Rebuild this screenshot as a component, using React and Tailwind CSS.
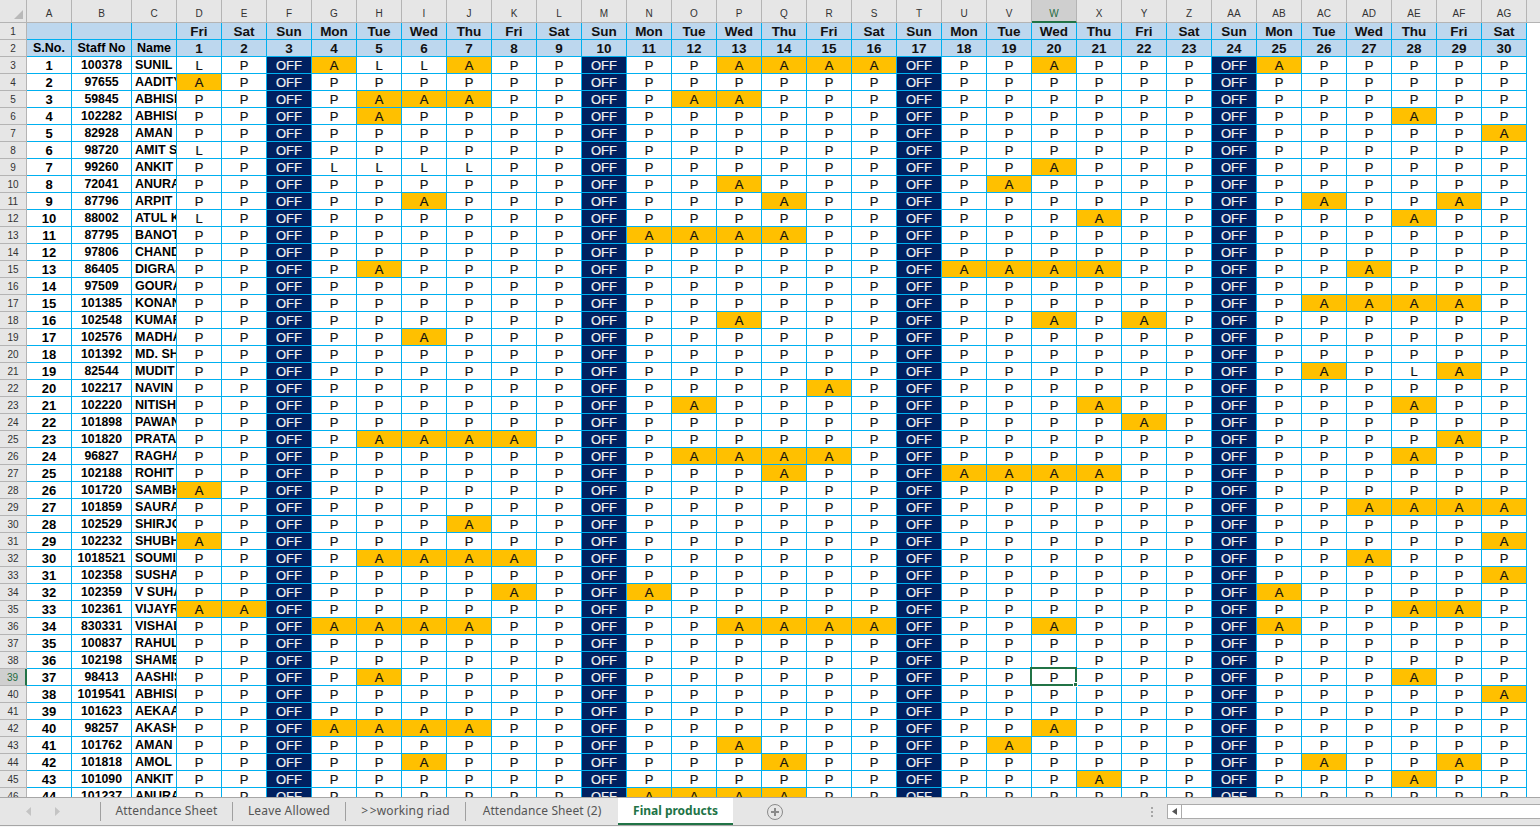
const days = ['Fri', 'Sat', 'Sun', 'Mon', 'Tue', 'Wed', 'Thu'];
const letters = ['A','B','C','D','E','F','G','H','I','J','K','L','M','N','O','P','Q','R','S','T','U','V','W','X','Y','Z','AA','AB','AC','AD','AE','AF','AG'];

const staff = [
  ['100378', 'SUNIL', { a: [4, 7, 13, 14, 15, 16, 20, 25], l: [1, 5, 6] }],
  ['97655', 'AADITYA', { a: [1] }],
  ['59845', 'ABHISHEK', { a: [5, 6, 7, 12, 13] }],
  ['102282', 'ABHISHEK', { a: [5, 28] }],
  ['82928', 'AMAN', { a: [30] }],
  ['98720', 'AMIT S', { l: [1] }],
  ['99260', 'ANKIT', { a: [20], l: [4, 5, 6, 7] }],
  ['72041', 'ANURAG', { a: [13, 19] }],
  ['87796', 'ARPIT', { a: [6, 14, 26, 29] }],
  ['88002', 'ATUL K', { a: [21, 28], l: [1] }],
  ['87795', 'BANOTH', { a: [11, 12, 13, 14] }],
  ['97806', 'CHAND', {}],
  ['86405', 'DIGRAJ', { a: [5, 18, 19, 20, 21, 27] }],
  ['97509', 'GOURAV', {}],
  ['101385', 'KONAN', { a: [26, 27, 28, 29] }],
  ['102548', 'KUMAR', { a: [13, 20, 22] }],
  ['102576', 'MADHAV', { a: [6] }],
  ['101392', 'MD. SH', {}],
  ['82544', 'MUDIT', { a: [26, 29], l: [28] }],
  ['102217', 'NAVIN', { a: [15] }],
  ['102220', 'NITISH', { a: [12, 21, 28] }],
  ['101898', 'PAWAN', { a: [22] }],
  ['101820', 'PRATAP', { a: [5, 6, 7, 8, 29] }],
  ['96827', 'RAGHAV', { a: [12, 13, 14, 15, 28] }],
  ['102188', 'ROHIT', { a: [14, 18, 19, 20, 21] }],
  ['101720', 'SAMBHU', { a: [1] }],
  ['101859', 'SAURAB', { a: [27, 28, 29, 30] }],
  ['102529', 'SHIRJO', { a: [7] }],
  ['102232', 'SHUBH', { a: [1, 30] }],
  ['1018521', 'SOUMIK', { a: [5, 6, 7, 8, 27] }],
  ['102358', 'SUSHANT', { a: [30] }],
  ['102359', 'V SUHAS', { a: [8, 11, 25] }],
  ['102361', 'VIJAYR', { a: [1, 2, 28, 29] }],
  ['830331', 'VISHAL', { a: [4, 5, 6, 7, 13, 14, 15, 16, 20, 25] }],
  ['100837', 'RAHUL', {}],
  ['102198', 'SHAMEE', {}],
  ['98413', 'AASHISH', { a: [5, 28] }],
  ['1019541', 'ABHISHEK', { a: [30] }],
  ['101623', 'AEKAAN', {}],
  ['98257', 'AKASH', { a: [4, 5, 6, 7, 20] }],
  ['101762', 'AMAN', { a: [13, 19] }],
  ['101818', 'AMOL', { a: [6, 14, 26, 29] }],
  ['101090', 'ANKIT', { a: [21, 28] }],
  ['101237', 'ANURAG', { a: [11, 12, 13, 14] }],
];

const dayNums = Array.from({ length: 30 }, (_, i) => i + 1);
const cols = 'grid grid-cols-[27px_45px_60px_45px_repeat(30,45px)_13px]';
const cell = 'h-[17px] pt-[1px] flex items-center justify-center overflow-hidden whitespace-nowrap border-r border-b border-[#00b0f0] leading-none';

function RowHead({ n, active }) {
  return (
    <div className={`h-[17px] pt-[1px] flex items-center justify-center border-r border-b border-[#b4b4b4] text-[10px] leading-none ${active ? 'bg-[#cfcfcf] text-[#1e6b41] border-r-2 border-r-[#217346]' : 'bg-[#e6e6e6] text-[#333]'}`}>
      {n}
    </div>
  );
}

function DayCell({ day, row }) {
  if (day % 7 === 3) {
    return <div className={`${cell} bg-[#002060] text-[#f2f2f2] text-[13px] [-webkit-text-stroke:0.2px]`}>OFF</div>;
  }
  const status = row.a?.includes(day) ? 'A' : row.l?.includes(day) ? 'L' : 'P';
  return (
    <div className={`${cell} text-[13px] text-[#111] [-webkit-text-stroke:0.2px] ${status === 'A' ? 'bg-[#ffc000]' : 'bg-white'}`}>{status}</div>
  );
}

function Tab({ children }) {
  return (
    <div className="h-[19px] pb-[1px] flex items-center justify-center border-r border-[#a0a0a0] text-[12px] text-[#555] tracking-[0.15px]">
      {children}
    </div>
  );
}

export default function App() {
  return (
    <div className="w-[1540px] h-[827px] overflow-hidden bg-white flex flex-col font-['Liberation_Sans',Arial,sans-serif]">
      <div className="h-[797px] overflow-hidden shrink-0">
        {/* column letters */}
        <div className={cols}>
          <div className="relative h-[23px] bg-[#e6e6e6] border-r border-b border-[#b4b4b4]">
            <div className="absolute right-[3px] bottom-[3px] w-0 h-0 border-l-[9px] border-l-transparent border-b-[9px] border-b-[#b9b9b9]" />
          </div>
          {letters.map((l) => (
            <div
              key={l}
              className={`h-[23px] flex items-center justify-center border-r text-[10px] pt-[6px] leading-none ${l === 'W' ? 'bg-[#cfcfcf] text-[#1e6b41] border-b-2 border-b-[#217346] border-r-[#b4b4b4]' : 'bg-[#e6e6e6] text-[#333] border-b border-b-[#b4b4b4] border-r-[#b4b4b4]'}`}
            >
              {l}
            </div>
          ))}
          <div className="h-[23px] bg-[#e6e6e6] border-b border-[#b4b4b4]" />
        </div>

        {/* two header rows */}
        <div className={cols}>
          <RowHead n={1} />
          <div className={`${cell} bg-[#bdd7ee]`} />
          <div className={`${cell} bg-[#bdd7ee]`} />
          <div className={`${cell} bg-[#bdd7ee]`} />
          {dayNums.map((d) => (
            <div key={d} className={`${cell} bg-[#bdd7ee] text-[#111] text-[13.5px] font-bold`}>{days[(d - 1) % 7]}</div>
          ))}
          <div className="h-[17px]" />

          <RowHead n={2} />
          <div className={`${cell} bg-[#bdd7ee] text-[12.5px] font-bold`}>S.No.</div>
          <div className={`${cell} bg-[#bdd7ee] text-[12.5px] font-bold`}>Staff No</div>
          <div className={`${cell} bg-[#bdd7ee] text-[12.5px] font-bold`}>Name</div>
          {dayNums.map((d) => (
            <div key={d} className={`${cell} bg-[#bdd7ee] text-[#111] text-[13.5px] font-bold`}>{d}</div>
          ))}
          <div className="h-[17px]" />
        </div>

        {/* staff rows */}
        <div className={`relative ${cols}`}>
          {staff.map((s, i) => (
            <div key={i} className="contents">
              <RowHead n={i + 3} active={i === 36} />
              <div className={`${cell} text-[13px] font-bold`}>{i + 1}</div>
              <div className={`${cell} text-[12.3px] font-bold`}>{s[0]}</div>
              <div className={`${cell} !justify-start pl-[3px] text-[12.5px] font-bold`}>{s[1]}</div>
              {dayNums.map((d) => (
                <DayCell key={d} day={d} row={s[2]} />
              ))}
              <div className="h-[17px]" />
            </div>
          ))}
          {/* selected cell W39 */}
          <div className="absolute left-[1030px] top-[610px] w-[47px] h-[19px] border-2 border-[#217346]">
            <div className="absolute -right-[3px] -bottom-[3px] w-[5px] h-[5px] bg-[#217346] border border-white" />
          </div>
        </div>
      </div>

      {/* sheet tabs */}
      <div className="h-[29px] shrink-0 bg-[#e6e6e6] border-t border-b border-[#a6a6a6] flex items-center font-['Noto_Sans',sans-serif]">
        <div className="w-[101px] h-[19px] flex items-center gap-[22px] pl-[26px] border-r border-[#a0a0a0] text-[#c4c4c4]">
          <svg width="6" height="9" viewBox="0 0 6 9" fill="currentColor"><path d="M5 0v9L0 4.5z" /></svg>
          <svg width="6" height="9" viewBox="0 0 6 9" fill="currentColor"><path d="M1 0v9l5-4.5z" /></svg>
        </div>
        <div className="w-[132px]"><Tab>Attendance Sheet</Tab></div>
        <div className="w-[113px]"><Tab>Leave Allowed</Tab></div>
        <div className="w-[120px]"><Tab>&gt;&#8202;&gt;working riad</Tab></div>
        <div className="w-[152px]"><div className="h-[19px] pb-[1px] flex items-center justify-center text-[12px] text-[#555] tracking-[0.1px]">Attendance Sheet (2)</div></div>
        <div className="w-[115px] h-[27px] -mt-[1px] pt-[1px] bg-white border-b-2 border-[#217346] flex items-center justify-center text-[12px] font-bold text-[#217346]">
          Final products
        </div>
        <div className="ml-[34px] w-[16px] h-[16px] rounded-full border border-[#8a8a8a] flex items-center justify-center text-[#8a8a8a]">
          <svg width="10" height="10" viewBox="0 0 10 10" stroke="currentColor" strokeWidth="2"><path d="M5 1v8M1 5h8" /></svg>
        </div>
        <div className="ml-[368px] flex flex-col gap-[2px]">
          <div className="w-[2px] h-[2px] bg-[#a6a6a6]" />
          <div className="w-[2px] h-[2px] bg-[#a6a6a6]" />
          <div className="w-[2px] h-[2px] bg-[#a6a6a6]" />
        </div>
        <div className="ml-[14px] flex-1 h-[15px] bg-white border-y border-l border-[#ababab] flex">
          <div className="w-[14px] border-r border-[#ababab] flex items-center justify-center">
            <svg width="5" height="7" viewBox="0 0 5 7" fill="#555"><path d="M5 0v7L0 3.5z" /></svg>
          </div>
        </div>
      </div>
      <div className="flex-1 bg-[#f6f6f6]" />
    </div>
  );
}
